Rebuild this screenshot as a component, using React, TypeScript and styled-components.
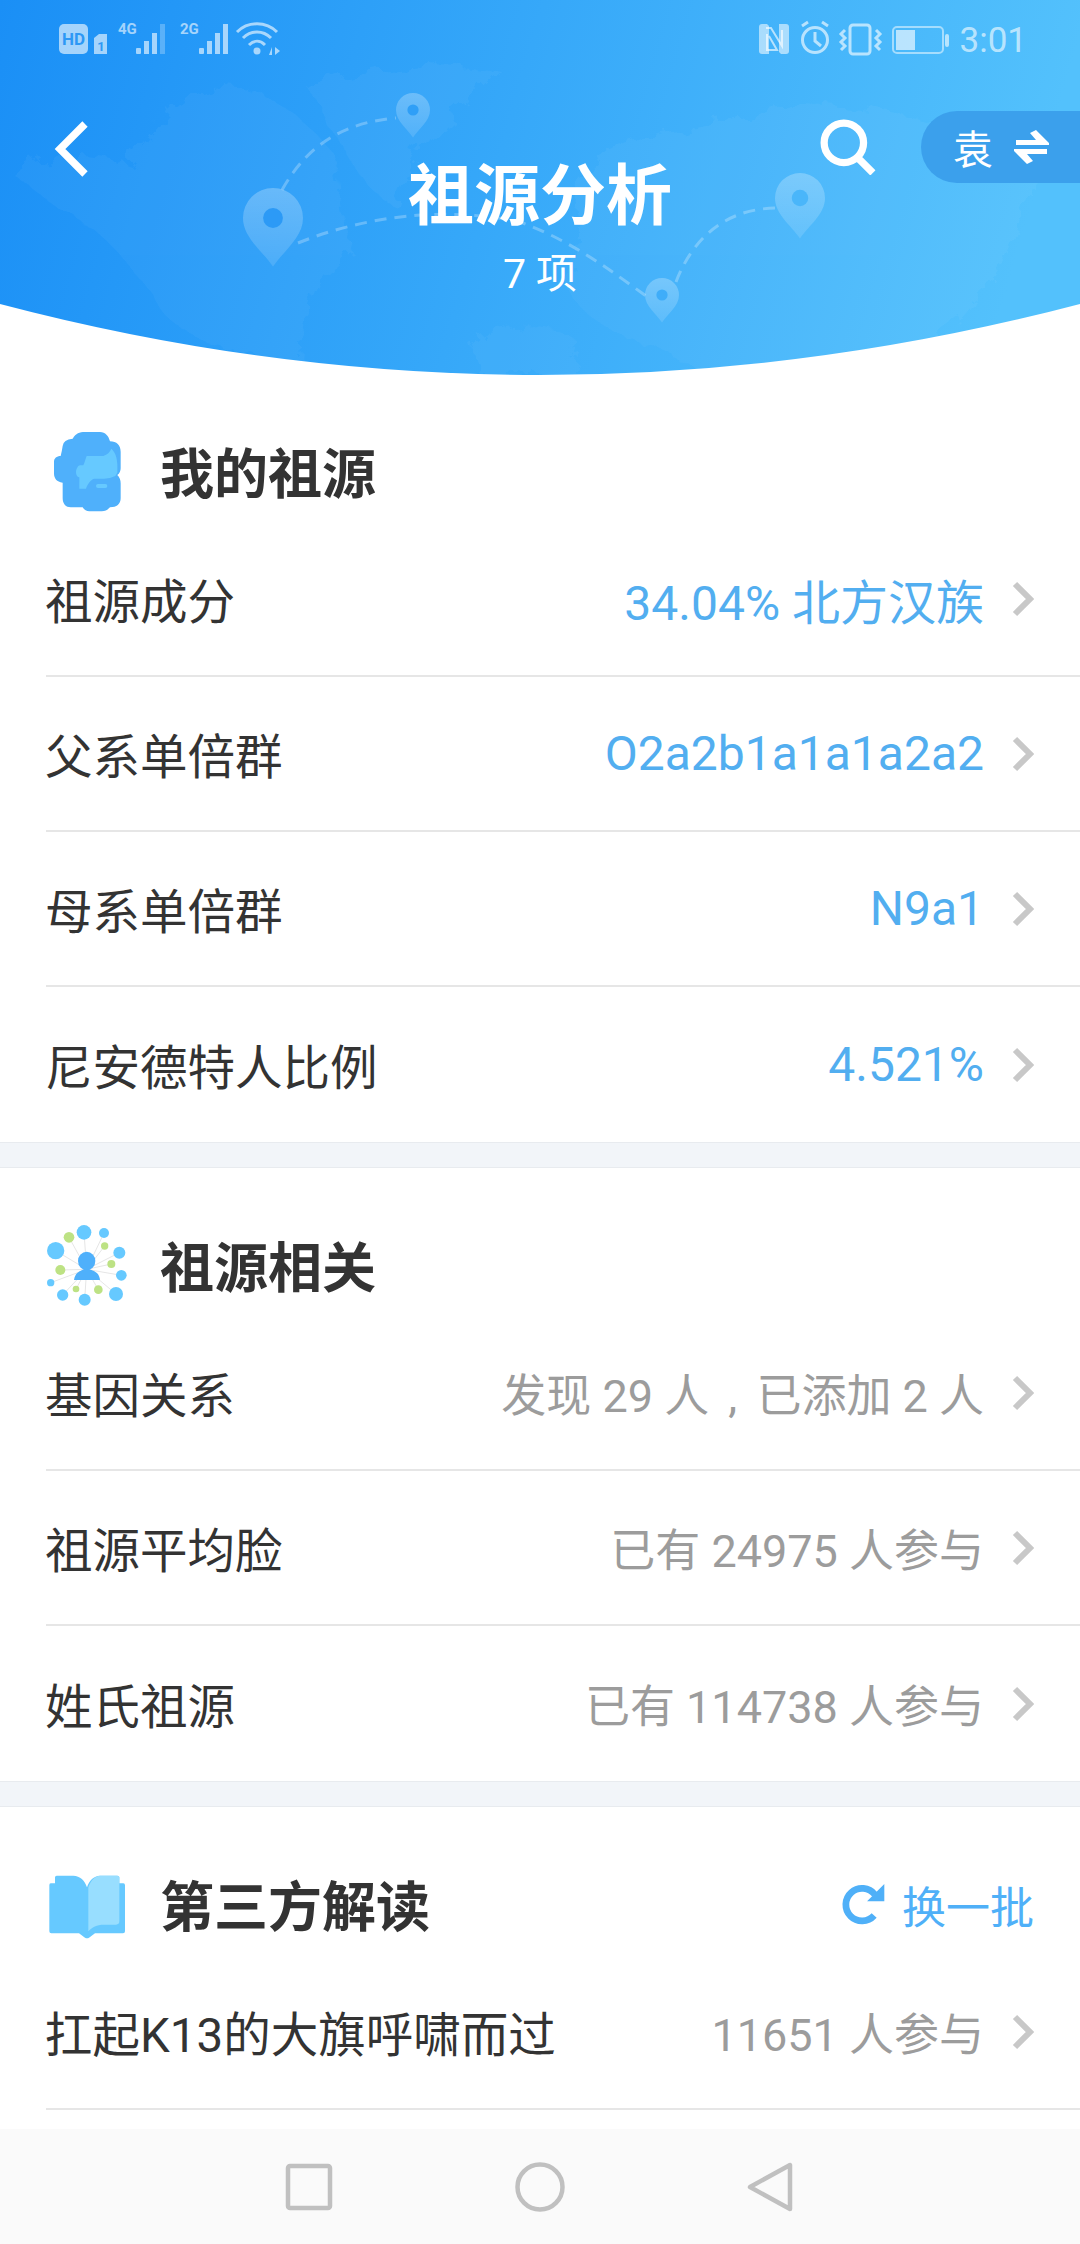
import styled, { createGlobalStyle } from 'styled-components'

const GlobalStyle = createGlobalStyle`
  html, body {
    margin: 0;
    padding: 0;
    background: #fff;
  }
  body {
    font-family: Roboto, "Noto Sans CJK SC", sans-serif;
  }
`

const Page = styled.div`
  width: 1080px;
  height: 2244px;
  display: flex;
  flex-direction: column;
  overflow: hidden;
  background: #fff;
`

const Content = styled.main`
  flex: 1;
  min-height: 0;
  overflow: hidden;
`

const Header = styled.header`
  position: relative;
  height: 375px;
  color: #fff;
`

const HeaderArt = styled.svg`
  position: absolute;
  inset: 0;
  width: 1080px;
  height: 375px;
`

const StatusBar = styled.div`
  position: relative;
  height: 80px;
  padding: 0 53px 0 58px;
  display: flex;
  align-items: center;
  justify-content: space-between;
  box-sizing: border-box;
`

const StatusGroup = styled.div`
  display: flex;
  align-items: center;
  gap: 8px;
`

const Clock = styled.span`
  font-size: 35px;
  color: rgba(255, 255, 255, 0.62);
  margin-left: 2px;
`

const TopRow = styled.div`
  position: relative;
  height: 136px;
  display: flex;
  align-items: flex-start;
  justify-content: space-between;
`

const BackIcon = styled.svg`
  margin: 41px 0 0 54px;
  width: 36px;
  height: 56px;
`

const TopActions = styled.div`
  display: flex;
  align-items: flex-start;
  gap: 45px;
`

const SearchIcon = styled.svg`
  margin-top: 39px;
  width: 56px;
  height: 56px;
`

const NameSwitch = styled.div`
  margin-top: 31px;
  width: 159px;
  height: 72px;
  box-sizing: border-box;
  padding-left: 32px;
  border-radius: 36px 0 0 36px;
  background: #3ba0ec;
  display: flex;
  align-items: center;
  gap: 21px;
  font-size: 40px;
`

const TitleBlock = styled.div`
  position: absolute;
  left: 0;
  right: 0;
  top: 155px;
  text-align: center;
`

const Title = styled.h1`
  margin: 0;
  font-size: 66px;
  line-height: 84px;
  font-weight: 700;
`

const Subtitle = styled.div`
  font-size: 41px;
  line-height: 52px;
  margin-top: 9px;
`

const Section = styled.section<{ $first?: boolean }>`
  padding-top: ${(p) => (p.$first ? 49 : 50)}px;
`

const Band = styled.div`
  height: 26px;
  box-sizing: border-box;
  background: #f2f5f9;
  border-top: 1px solid #e8ebef;
  border-bottom: 1px solid #e8ebef;
`

const SectionHead = styled.div`
  height: 98px;
  padding: 0 46px;
  display: flex;
  align-items: center;
`

const HeadIcon = styled.svg`
  width: 90px;
  height: 90px;
  margin-right: 24px;
  flex: none;
`

const HeadTitle = styled.h2`
  flex: 1;
  margin: 0 0 5px;
  font-size: 54px;
  font-weight: 700;
  color: #333;
`

const RefreshAction = styled.div`
  display: flex;
  align-items: center;
  gap: 17px;
  margin-bottom: 3px;
  font-size: 44px;
  color: #4fb0f8;
`

const Row = styled.div`
  height: 155px;
  box-sizing: border-box;
  margin-left: 46px;
  padding-right: 46px;
  display: flex;
  align-items: center;
  justify-content: space-between;
  border-bottom: 2px solid #e6e6e6;
`

const LastRow = styled(Row)`
  border-bottom: none;
`

const RowLabel = styled.span`
  margin-left: -1px;
  font-size: 47.5px;
  color: #333;
`

const RowRight = styled.div`
  display: flex;
  align-items: center;
  gap: 28px;
`

const RowValue = styled.span<{ $muted?: boolean }>`
  font-size: ${(p) => (p.$muted ? 45 : 48)}px;
  color: ${(p) => (p.$muted ? '#9c9c9c' : '#52aef0')};
`

const Comma = styled.span`
  margin: 0 8px;
`

const ChevronIcon = styled.svg`
  width: 22px;
  height: 36px;
`

const NavBar = styled.nav`
  height: 115px;
  flex: none;
  box-sizing: border-box;
  padding-top: 1px;
  background: #fafafa;
  display: flex;
  align-items: center;
  justify-content: center;
  gap: 181px;
`

const NavIcon = styled.svg`
  width: 50px;
  height: 50px;
  color: #c0c0c0;
`

const pinPath = (x: number, y: number, r: number) =>
  `M${x} ${y + r * 1.62} C${x - r * 0.35} ${y + r * 1.1} ${x - r} ${y + r * 0.65} ${x - r} ${y} A${r} ${r} 0 1 1 ${x + r} ${y} C${x + r} ${y + r * 0.65} ${x + r * 0.35} ${y + r * 1.1} ${x} ${y + r * 1.62}Z`

function Chevron() {
  return (
    <ChevronIcon viewBox="0 0 22 36" fill="none" stroke="#c8c8c8" strokeWidth="6">
      <path d="M3 3 L18 18 L3 33" />
    </ChevronIcon>
  )
}

function HeaderBackground() {
  const pins = [
    { x: 273, y: 218, r: 30, hole: '#2c9af6' },
    { x: 413, y: 110, r: 17, hole: '#2f9ff7' },
    { x: 800, y: 198, r: 25, hole: '#4ab6fa' },
    { x: 662, y: 295, r: 17, hole: '#3fadf9' },
  ]
  return (
    <HeaderArt viewBox="0 0 1080 375">
      <defs>
        <linearGradient id="sky" x1="0" y1="0" x2="1" y2="0.1">
          <stop offset="0" stopColor="#1a8ff6" />
          <stop offset="0.5" stopColor="#36a8f9" />
          <stop offset="1" stopColor="#53c1fc" />
        </linearGradient>
        <linearGradient id="pinFill" x1="0" y1="0" x2="0" y2="1">
          <stop offset="0" stopColor="#fff" stopOpacity="0.26" />
          <stop offset="1" stopColor="#fff" stopOpacity="0.12" />
        </linearGradient>
        <clipPath id="arc">
          <path d="M0 0H1080V304Q540 446 0 304Z" />
        </clipPath>
        <filter id="coast" x="-5%" y="-5%" width="110%" height="110%">
          <feTurbulence type="fractalNoise" baseFrequency="0.05" numOctaves="4" seed="7" />
          <feDisplacementMap in="SourceGraphic" scale="26" />
        </filter>
      </defs>
      <g clipPath="url(#arc)">
        <rect width="1080" height="375" fill="url(#sky)" />
        <g fill="#fff" opacity="0.035" filter="url(#coast)">
          <path d="M14 175 C40 150 90 150 130 165 C160 130 170 105 210 90 C250 80 300 110 330 150 C345 190 340 230 355 255 C330 260 300 300 300 372 C260 350 200 350 170 320 C140 280 110 230 60 210Z" />
          <path d="M310 90 C350 65 430 58 500 70 C470 105 420 130 395 205 C365 195 345 150 310 90Z" />
          <path d="M570 190 C600 130 700 130 790 105 C880 105 990 125 1040 185 C1010 215 1020 260 975 300 C950 350 850 370 700 372 C650 340 590 335 565 285 C580 250 590 220 570 190Z" />
          <path d="M470 345 C510 320 560 320 580 345 L570 375 L480 375Z" />
        </g>
        <g fill="none" stroke="#fff" strokeOpacity="0.26" strokeWidth="3" strokeDasharray="12 8">
          <path d="M282 190 C310 140 350 122 396 118" />
          <path d="M298 243 C360 218 440 205 520 222 C570 240 610 270 646 296" />
          <path d="M676 282 C690 245 720 208 778 208" />
        </g>
        {pins.map((p) => (
          <g key={p.x}>
            <path d={pinPath(p.x, p.y, p.r)} fill="url(#pinFill)" />
            <circle cx={p.x} cy={p.y} r={p.r * 0.33} fill={p.hole} />
          </g>
        ))}
      </g>
    </HeaderArt>
  )
}

function StatusLeft() {
  return (
    <svg width="240" height="48" viewBox="0 0 240 48" fill="#fff" fillOpacity="0.6">
      <rect x="1" y="8" width="29" height="30" rx="5" />
      <text x="15.5" y="29" fontSize="17" fontWeight="700" textAnchor="middle" fill="#2d98f5" fillOpacity="1" fontFamily="Roboto">
        HD
      </text>
      <path d="M36 22 L41 18 H49 V38 H36Z" />
      <text x="43" y="35" fontSize="13" fontWeight="700" textAnchor="middle" fill="#2d98f5" fillOpacity="1" fontFamily="Roboto">
        1
      </text>
      <text x="60" y="18" fontSize="15" fontWeight="700" fontFamily="Roboto">
        4G
      </text>
      <rect x="78" y="32" width="5" height="6" rx="1" />
      <rect x="86" y="25" width="5" height="13" />
      <rect x="94" y="17" width="5" height="21" />
      <rect x="102" y="8" width="5" height="30" fillOpacity="0.25" />
      <text x="122" y="18" fontSize="15" fontWeight="700" fontFamily="Roboto">
        2G
      </text>
      <rect x="141" y="32" width="5" height="6" rx="1" />
      <rect x="149" y="25" width="5" height="13" />
      <rect x="157" y="17" width="5" height="21" />
      <rect x="165" y="8" width="5" height="30" />
      <g fill="none" stroke="#fff" strokeOpacity="0.6" strokeWidth="3">
        <path d="M179 16 C190 5 208 5 219 16" />
        <path d="M185 22 C193 14 205 14 213 22" />
        <path d="M191 29 C196 24 202 24 207 29" />
      </g>
      <circle cx="199" cy="35" r="3.5" />
      <path d="M214 31 V39 H211Z M217 31 L222 35 L217 39Z" />
    </svg>
  )
}

function StatusRight() {
  return (
    <svg width="126" height="48" viewBox="0 0 126 48" fill="none" stroke="#fff" strokeOpacity="0.62" strokeWidth="3">
      <path d="M1 11 Q1 8 4 8 H9 L11 10 V38 H4 Q1 38 1 35Z" fill="#fff" fillOpacity="0.55" stroke="none" />
      <path d="M31 35 Q31 38 28 38 H23 L21 36 V8 H28 Q31 8 31 11Z" fill="#fff" fillOpacity="0.55" stroke="none" />
      <path d="M8 12 H13 L24 30 V14 M9 18 V34 H19 L11 20" strokeWidth="2" />
      <circle cx="57" cy="24" r="12.5" />
      <path d="M57 16 V25 L63 30" />
      <path d="M44 10 L50 6 M70 10 L64 6" />
      <rect x="92" y="9" width="20" height="29" rx="3" />
      <path d="M87 14 L83 18 L87 22 L83 26 L87 30 L83 34" />
      <path d="M118 14 L122 18 L118 22 L122 26 L118 30 L122 34" />
    </svg>
  )
}

function BatteryIcon() {
  return (
    <svg width="58" height="48" viewBox="0 0 58 48">
      <rect x="1" y="11" width="50" height="26" rx="4" fill="none" stroke="#fff" strokeOpacity="0.5" strokeWidth="2" />
      <rect x="4" y="14" width="19" height="20" fill="#fff" fillOpacity="0.62" />
      <rect x="53" y="18" width="4" height="13" rx="2" fill="#fff" fillOpacity="0.6" />
    </svg>
  )
}

function FaceIcon() {
  return (
    <HeadIcon viewBox="78 54 270 270">
      <path
        fill="#4fb0fb"
        d="M128 108 Q130 88 158 86 C168 70 178 66 195 66 H240 C256 66 266 78 270 94 C290 94 302 106 302 125 V175 Q302 188 292 195 Q302 205 302 220 V265 C302 282 290 292 270 292 C262 300 256 304 245 304 H208 C198 304 192 298 188 292 H152 C138 292 128 282 128 265 V218 C110 216 102 206 102 190 V155 C102 145 110 138 122 138 Q126 122 128 108Z"
      />
      <path
        fill="#66c9ff"
        d="M200 138 H250 C262 134 270 126 274 116 C288 128 294 150 292 188 L286 198 Q270 206 252 206 H222 C212 210 202 222 198 236 H178 V202 C168 200 166 186 170 176 Q174 166 180 166 H190 C194 158 196 148 200 138Z"
      />
      <rect x="228" y="222" width="34" height="12" rx="6" fill="#66c9ff" />
    </HeadIcon>
  )
}

function NetworkIcon() {
  const blue: [number, number, number][] = [
    [192, 94, 22], [252, 96, 15], [298, 155, 18], [304, 223, 16], [288, 279, 21], [194, 296, 18], [128, 282, 17], [92, 245, 11], [107, 149, 26],
  ]
  const green: [number, number, number][] = [
    [147, 109, 16], [254, 135, 11], [274, 189, 12], [121, 207, 15], [168, 264, 10], [235, 266, 13],
  ]
  return (
    <HeadIcon viewBox="78 63 270 270">
      <g stroke="#e6e6e6" strokeWidth="3">
        {[...blue, ...green].map(([x, y]) => (
          <line key={`${x}-${y}`} x1="200" y1="205" x2={x} y2={y} />
        ))}
      </g>
      {blue.map(([x, y, r]) => (
        <circle key={`${x}-${y}`} cx={x} cy={y} r={r} fill="#66c9ff" />
      ))}
      {green.map(([x, y, r]) => (
        <circle key={`${x}-${y}`} cx={x} cy={y} r={r} fill="#bde284" />
      ))}
      <ellipse cx="200" cy="180" rx="26" ry="28" fill="#4fb0fb" />
      <path fill="#4fb0fb" d="M162 237 C165 215 180 207 200 205 C222 207 238 215 240 237Z" />
    </HeadIcon>
  )
}

function BookIcon() {
  return (
    <HeadIcon viewBox="78 51 270 270">
      <path
        fill="#66c9ff"
        d="M92 118 H105 V100 Q105 95 110 95 H160 C180 95 195 110 201 130 C207 110 222 95 240 95 H292 Q298 95 298 100 V118 H310 Q315 118 315 124 V262 Q315 268 309 268 H225 L207 281 Q201 285 195 281 L177 268 H94 Q88 268 88 262 V124 Q88 118 92 118Z"
      />
      <path
        fill="#98deff"
        d="M205 130 C212 110 225 95 240 95 H292 Q298 95 298 100 V232 Q298 242 288 242 H250 C232 242 215 250 205 262Z"
      />
    </HeadIcon>
  )
}

function App() {
  return (
    <Page>
      <GlobalStyle />
      <Content>
        <Header>
          <HeaderBackground />
          <StatusBar>
            <StatusGroup>
              <StatusLeft />
            </StatusGroup>
            <StatusGroup>
              <StatusRight />
              <BatteryIcon />
              <Clock>3:01</Clock>
            </StatusGroup>
          </StatusBar>
          <TopRow>
            <BackIcon viewBox="0 0 36 56" fill="none" stroke="#fff" strokeWidth="7.5">
              <path d="M31 3 L6 28 L31 53" />
            </BackIcon>
            <TopActions>
              <SearchIcon viewBox="0 0 54 54" fill="none" stroke="#fff" strokeWidth="7">
                <circle cx="23" cy="23" r="19" />
                <path d="M36 37 L51 52" />
              </SearchIcon>
              <NameSwitch>
                <span>袁</span>
                <svg width="35" height="36" viewBox="0 0 35 36" fill="#fff">
                  <path d="M2 11 H22 L16 4 L22 1 L35 14 V16 H2Z" />
                  <path d="M33 20 V25 H13 L19 32 L13 35 L0 22 V20Z" />
                </svg>
              </NameSwitch>
            </TopActions>
          </TopRow>
          <TitleBlock>
            <Title>祖源分析</Title>
            <Subtitle>7 项</Subtitle>
          </TitleBlock>
        </Header>

        <Section $first>
          <SectionHead>
            <FaceIcon />
            <HeadTitle>我的祖源</HeadTitle>
          </SectionHead>
          <div>
            <Row>
              <RowLabel>祖源成分</RowLabel>
              <RowRight>
                <RowValue>34.04% 北方汉族</RowValue>
                <Chevron />
              </RowRight>
            </Row>
            <Row>
              <RowLabel>父系单倍群</RowLabel>
              <RowRight>
                <RowValue>O2a2b1a1a1a2a2</RowValue>
                <Chevron />
              </RowRight>
            </Row>
            <Row>
              <RowLabel>母系单倍群</RowLabel>
              <RowRight>
                <RowValue>N9a1</RowValue>
                <Chevron />
              </RowRight>
            </Row>
            <LastRow>
              <RowLabel>尼安德特人比例</RowLabel>
              <RowRight>
                <RowValue>4.521%</RowValue>
                <Chevron />
              </RowRight>
            </LastRow>
          </div>
        </Section>
        <Band />
        <Section>
          <SectionHead>
            <NetworkIcon />
            <HeadTitle>祖源相关</HeadTitle>
          </SectionHead>
          <div>
            <Row>
              <RowLabel>基因关系</RowLabel>
              <RowRight>
                <RowValue $muted>
                  发现 29 人<Comma> , </Comma>已添加 2 人
                </RowValue>
                <Chevron />
              </RowRight>
            </Row>
            <Row>
              <RowLabel>祖源平均脸</RowLabel>
              <RowRight>
                <RowValue $muted>已有 24975 人参与</RowValue>
                <Chevron />
              </RowRight>
            </Row>
            <LastRow>
              <RowLabel>姓氏祖源</RowLabel>
              <RowRight>
                <RowValue $muted>已有 114738 人参与</RowValue>
                <Chevron />
              </RowRight>
            </LastRow>
          </div>
        </Section>
        <Band />
        <Section>
          <SectionHead>
            <BookIcon />
            <HeadTitle>第三方解读</HeadTitle>
            <RefreshAction>
              <svg width="44" height="44" viewBox="178 130 130 130" fill="none">
                <path d="M276 226 A48 48 0 1 1 278 164" stroke="#4fb0f8" strokeWidth="20" />
                <path d="M306 133 V184 H255Z" fill="#4fb0f8" />
              </svg>
              <span>换一批</span>
            </RefreshAction>
          </SectionHead>
          <div>
            <Row>
              <RowLabel>扛起K13的大旗呼啸而过</RowLabel>
              <RowRight>
                <RowValue $muted>11651 人参与</RowValue>
                <Chevron />
              </RowRight>
            </Row>
          </div>
        </Section>
      </Content>
      <NavBar>
        <NavIcon viewBox="0 0 50 50" fill="none" stroke="currentColor" strokeWidth="4.5">
          <rect x="4" y="4" width="42" height="42" rx="2" />
        </NavIcon>
        <NavIcon viewBox="0 0 50 50" fill="none" stroke="currentColor" strokeWidth="4.5">
          <circle cx="25" cy="25" r="22.5" />
        </NavIcon>
        <NavIcon viewBox="0 0 50 50" fill="none" stroke="currentColor" strokeWidth="4.5" strokeLinejoin="round">
          <path d="M44 3 V47 L4 25Z" />
        </NavIcon>
      </NavBar>
    </Page>
  )
}

export default App
